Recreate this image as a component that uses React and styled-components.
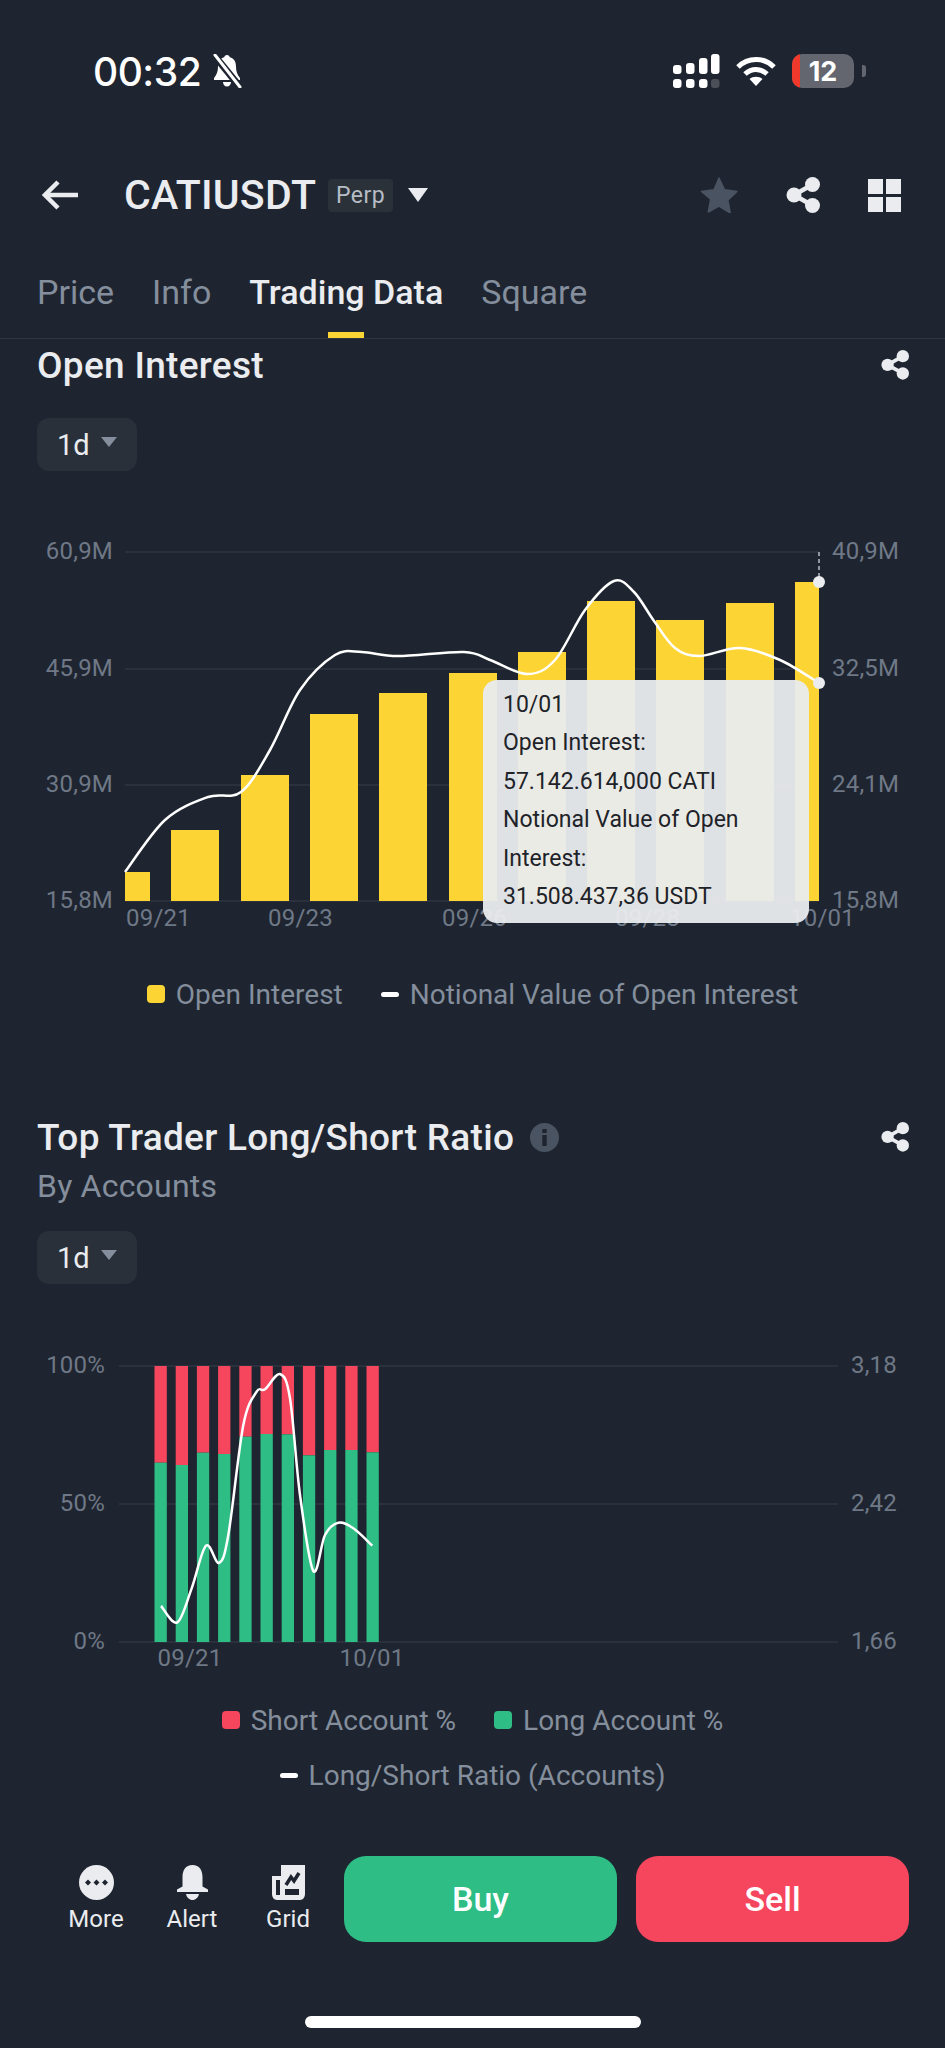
import React from 'react';
import styled, { createGlobalStyle } from 'styled-components';

const COLORS = {
  bg: '#1e2530',
  panel: '#2b3139',
  text: '#eaecef',
  muted: '#848e9c',
  axis: '#6f7886',
  grid: '#2f3641',
  yellow: '#fcd535',
  green: '#2ebd85',
  red: '#f6465d',
};

const FONT = `Roboto, "Noto Sans", "Liberation Sans", sans-serif`;

const GlobalStyle = createGlobalStyle`
  html, body { margin: 0; padding: 0; background: ${COLORS.bg}; }
  * { box-sizing: border-box; }
`;

// --- layout ---

const Screen = styled.div`
  width: 945px;
  height: 2048px;
  display: flex;
  flex-direction: column;
  overflow: hidden;
  background: ${COLORS.bg};
  color: ${COLORS.text};
  font-family: ${FONT};
`;

const StatusBar = styled.div`
  height: 142px;
  flex: none;
  display: flex;
  align-items: center;
  justify-content: space-between;
  padding: 0 79px 0 93px;
`;

const StatusGroup = styled.div`
  display: flex;
  align-items: center;
  gap: ${p => p.$gap}px;
`;

const Clock = styled.span`
  font-family: Inter, ${FONT};
  font-size: 39px;
  font-weight: 500;
  color: #fff;
  letter-spacing: -0.5px;
`;

const Battery = styled.div`
  position: relative;
  width: 62px;
  height: 34px;
  border-radius: 10px;
  overflow: hidden;
  background: #63666e;
  display: flex;
  align-items: center;
  justify-content: center;
  font-size: 27px;
  font-weight: 700;
  color: #fff;
  font-family: Inter, ${FONT};
  &::before {
    content: '';
    position: absolute;
    left: 0;
    top: 0;
    bottom: 0;
    width: 8px;
    background: #f0392b;
  }
`;

const BatteryNub = styled.div`
  width: 4px;
  height: 12px;
  margin-left: -8px;
  border-radius: 0 3px 3px 0;
  background: #63666e;
`;

const NavBar = styled.div`
  height: 106px;
  flex: none;
  display: flex;
  align-items: center;
  padding: 0 44px 0 42px;
`;

const Symbol = styled.h1`
  margin: 0 12px 0 46px;
  font-size: 41px;
  font-weight: 500;
  letter-spacing: 0.2px;
  color: ${COLORS.text};
`;

const Badge = styled.span`
  padding: 3px 8px;
  border-radius: 4px;
  background: ${COLORS.panel};
  color: #b7bdc6;
  font-size: 23px;
  letter-spacing: 0.4px;
`;

const NavCaret = styled.span`
  width: 0;
  height: 0;
  margin-left: 15px;
  border-left: 10px solid transparent;
  border-right: 10px solid transparent;
  border-top: 14px solid ${COLORS.text};
`;

const NavActions = styled.div`
  margin-left: auto;
  display: flex;
  align-items: center;
  gap: 48px;
`;

const Tabs = styled.div`
  height: 91px;
  flex: none;
  display: flex;
  gap: 38px;
  padding: 0 37px;
  border-bottom: 1px solid ${COLORS.grid};
`;

const Tab = styled.div`
  position: relative;
  padding-top: 24px;
  font-size: 34px;
  font-weight: ${p => (p.$active ? 500 : 400)};
  color: ${p => (p.$active ? COLORS.text : COLORS.muted)};
  ${p => p.$active && `
    &::after {
      content: '';
      position: absolute;
      left: 50%;
      bottom: 0;
      width: 36px;
      height: 6px;
      margin-left: -18px;
      background: ${COLORS.yellow};
    }
  `}
`;

const Body = styled.div`
  flex: 1;
  min-height: 0;
  overflow: hidden;
`;

const TitleRow = styled.div`
  height: ${p => p.$height}px;
  display: flex;
  align-items: center;
  padding: 0 36px 0 37px;
  margin-top: ${p => p.$top || 0}px;
`;

const Title = styled.h2`
  margin: 0;
  font-size: 37px;
  font-weight: 500;
  letter-spacing: 0.3px;
  color: ${COLORS.text};
`;

const InfoDot = styled.span`
  display: flex;
  margin-left: 16px;
`;

const RightIcon = styled.span`
  display: flex;
  margin-left: auto;
`;

const SubTitle = styled.div`
  height: 46px;
  line-height: 46px;
  padding-left: 37px;
  font-size: 32px;
  color: ${COLORS.muted};
  letter-spacing: 0.2px;
`;

const Dropdown = styled.div`
  width: 100px;
  height: 53px;
  margin: ${p => p.$top}px 0 0 37px;
  padding-left: 20px;
  display: flex;
  align-items: center;
  gap: 11px;
  border-radius: 12px;
  background: #2a3039;
  font-size: 29px;
  color: ${COLORS.text};
`;

const DropdownCaret = styled.span`
  width: 0;
  height: 0;
  margin-bottom: 5px;
  border-left: 8px solid transparent;
  border-right: 8px solid transparent;
  border-top: 10px solid ${COLORS.muted};
`;

const ChartBox = styled.div`
  position: relative;
  width: 945px;
  height: ${p => p.$height}px;
  margin-top: ${p => p.$top}px;
`;

const ChartSvg = styled.svg`
  display: block;
`;

const AxisLabel = styled.text`
  font-family: ${FONT};
  font-size: 24px;
  fill: ${COLORS.axis};
  letter-spacing: 0.2px;
`;

const Tooltip = styled.div`
  position: absolute;
  left: 483px;
  top: 180px;
  width: 326px;
  height: 243px;
  padding: 6px 20px;
  border-radius: 14px;
  background: rgba(234, 236, 239, 0.95);
  color: #1e2329;
  font-size: 23px;
  line-height: 38.4px;
`;

const LegendRow = styled.div`
  height: ${p => p.$height}px;
  display: flex;
  align-items: center;
  justify-content: center;
  gap: 38px;
  font-size: 28px;
  color: ${COLORS.muted};
`;

const LegendItem = styled.div`
  display: flex;
  align-items: center;
  gap: 11px;
`;

const Swatch = styled.span`
  width: 18px;
  height: 18px;
  border-radius: 4px;
  background: ${p => p.$color};
`;

const LegendDash = styled.span`
  width: 18px;
  height: 5px;
  border-radius: 3px;
  background: #fff;
`;

const BottomBar = styled.div`
  height: 218px;
  flex: none;
  display: flex;
  flex-direction: column;
  padding: 26px 36px 0 48px;
`;

const ActionRow = styled.div`
  display: flex;
  align-items: center;
`;

const ToolButtons = styled.div`
  display: flex;
  width: 296px;
`;

const ToolButton = styled.div`
  width: 96px;
  height: 86px;
  padding-top: 9px;
  display: flex;
  flex-direction: column;
  align-items: center;
  gap: 5px;
  font-size: 24px;
  color: ${COLORS.text};
`;

const TradeButton = styled.div`
  width: 273px;
  height: 86px;
  margin-left: ${p => p.$left}px;
  display: flex;
  align-items: center;
  justify-content: center;
  border-radius: 22px;
  background: ${p => p.$color};
  color: #fff;
  font-size: 34px;
  font-weight: 500;
`;

const HomeIndicator = styled.div`
  width: 336px;
  height: 12px;
  margin: 74px 0 0 257px;
  border-radius: 6px;
  background: #fff;
`;

// --- data (chart coords, page x / y minus chart top) ---

const OI_TOP = 500;
const oiBars = [
  [125, 25, 872], [171, 48, 830], [241, 48, 775], [310, 48, 714], [379, 48, 693], [449, 48, 673],
  [518, 48, 652], [587, 48, 601], [656, 48, 620], [726, 48, 603], [795, 24, 582],
].map(([x, w, top]) => ({ x, w, y: top - OI_TOP, h: 901 - top }));

const oiLine = [
  [125, 872], [165, 820], [208, 797], [241, 792], [270, 750], [300, 690], [335, 655], [362, 652], [398, 656],
  [464, 652], [490, 660], [527, 674], [555, 660], [585, 610], [614, 581], [634, 592], [654, 621], [675, 648], [699, 656],
  [740, 648], [780, 660], [819, 683],
].map(([x, y]) => [x, y - OI_TOP]);

const oiAxis = [
  { y: 552, left: '60,9M', right: '40,9M' },
  { y: 669, left: '45,9M', right: '32,5M' },
  { y: 785, left: '30,9M', right: '24,1M' },
  { y: 901, left: '15,8M', right: '15,8M' },
];

const oiDates = [[126, '09/21'], [268, '09/23'], [442, '09/26'], [615, '09/28'], [790, '10/01']];

const LS_TOP = 1340;
const lsGreenTops = [383, 390, 353, 357, 305, 297, 298, 361, 345, 345, 352].map(v => v / 3);

const lsLine = [
  [183, 813], [232, 862], [275, 760], [318, 632], [357, 684], [385, 600], [430, 270], [470, 170], [495, 163],
  [540, 117], [570, 190], [600, 480], [640, 708], [675, 600], [715, 563], [760, 580], [817, 632],
].map(([x, y]) => [x / 3 + 100, y / 3]);

const lsAxis = [
  { y: 31, left: '100%', right: '3,18' },
  { y: 169, left: '50%', right: '2,42' },
  { y: 307, left: '0%', right: '1,66' },
];

// catmull-rom through the points
const smoothPath = pts => {
  let d = `M${pts[0][0]} ${pts[0][1]}`;
  for (let i = 0; i < pts.length - 1; i++) {
    const p0 = pts[i - 1] || pts[i];
    const p1 = pts[i];
    const p2 = pts[i + 1];
    const p3 = pts[i + 2] || p2;
    const c1x = p1[0] + (p2[0] - p0[0]) / 6;
    const c1y = p1[1] + (p2[1] - p0[1]) / 6;
    const c2x = p2[0] - (p3[0] - p1[0]) / 6;
    const c2y = p2[1] - (p3[1] - p1[1]) / 6;
    d += ` C${c1x} ${c1y} ${c2x} ${c2y} ${p2[0]} ${p2[1]}`;
  }
  return d;
};

// --- icons ---

const MutedBell = () => (
  <svg width="32" height="34" viewBox="0 0 32 34">
    <path d="M16 1c-1.600 0-2.600 1-2.800 2.300C8.800 4.400 7 8 7 12.500c0 5-1.200 8-4 11.500v2h26v-2c-2.800-3.500-4-6.500-4-11.500 0-4.500-1.800-8.100-6.200-9.200C18.600 2 17.600 1 16 1z" fill="#fff" />
    <path d="M12 28h8c0 2.600-1.800 4.500-4 4.500s-4-1.900-4-4.500z" fill="#fff" />
    <path d="M3 1l26 32" stroke={COLORS.bg} strokeWidth="7" />
    <path d="M4 1l25 32" stroke="#fff" strokeWidth="3" strokeLinecap="round" />
  </svg>
);

const SignalIcon = () => (
  <svg width="47" height="34" viewBox="0 0 47 34" fill="#fff">
    <rect x="0" y="11" width="8.500" height="9" rx="3" />
    <rect x="13" y="9" width="8.500" height="11" rx="3" />
    <rect x="26" y="4" width="8.500" height="16" rx="3" />
    <rect x="38" y="0" width="8.500" height="20" rx="3" />
    <rect x="0" y="25" width="8.500" height="9" rx="3" />
    <rect x="13" y="25" width="8.500" height="9" rx="3" />
    <rect x="26" y="25" width="8.500" height="9" rx="3" />
    <rect x="38" y="25" width="8.500" height="9" rx="3" fill="#4a4f58" />
  </svg>
);

const WifiIcon = () => (
  <svg width="40" height="30" viewBox="0 0 40 30" fill="none" stroke="#fff" strokeWidth="5">
    <path d="M2 11c10-10 26-10 36 0" />
    <path d="M9 18c6.500-6 15.500-6 22 0" />
    <path d="M20 30l-6.500-7c3.500-3 9.500-3 13 0z" fill="#fff" stroke="none" />
  </svg>
);

const BackArrow = () => (
  <svg width="36" height="30" viewBox="0 0 36 30" fill="none" stroke={COLORS.text} strokeWidth="4.500">
    <path d="M36 15H4" />
    <path d="M16 2L3 15l13 13" />
  </svg>
);

const StarIcon = () => (
  <svg width="38" height="36" viewBox="0 0 38 36">
    <path d="M19 1l5.500 11.800 12.500 1.600-9.200 8.800 2.400 12.800L19 29l-10.700 6 2.400-12.800L1.500 14.400 14 12.800z" fill="#4a5361" stroke="#4a5361" strokeWidth="1.500" strokeLinejoin="round" />
  </svg>
);

const ShareIcon = ({ size = 34 }) => (
  <svg width={size} height={size * 36 / 34} viewBox="0 0 34 36" fill={COLORS.text}>
    <circle cx="8" cy="18" r="7.500" />
    <circle cx="26.500" cy="7.500" r="7.500" />
    <circle cx="26.500" cy="28.500" r="7.500" />
    <path d="M8 18L26.500 7.500M8 18l18.500 10.500" stroke={COLORS.text} strokeWidth="4.500" />
  </svg>
);

const GridIcon = () => (
  <svg width="33" height="33" viewBox="0 0 33 33" fill={COLORS.text}>
    <rect x="0" y="0" width="15" height="15" />
    <rect x="18" y="0" width="15" height="15" />
    <rect x="0" y="18" width="15" height="15" />
    <rect x="18" y="18" width="15" height="15" />
  </svg>
);

const InfoIcon = () => (
  <svg width="29" height="29" viewBox="0 0 29 29">
    <circle cx="14.500" cy="14.500" r="14.500" fill="#4a5361" />
    <rect x="12.300" y="12" width="4.400" height="11" fill={COLORS.bg} />
    <rect x="12.300" y="6" width="4.400" height="4" fill={COLORS.bg} />
  </svg>
);

const MoreIcon = () => (
  <svg width="35" height="35" viewBox="0 0 35 35">
    <circle cx="17.500" cy="17.500" r="17.500" fill={COLORS.text} />
    <path d="M9 14.500l3 3-3 3-3-3zM17.500 14.500l3 3-3 3-3-3zM26 14.500l3 3-3 3-3-3z" fill={COLORS.bg} />
  </svg>
);

const BellIcon = () => (
  <svg width="33" height="35" viewBox="0 0 33 35" fill={COLORS.text}>
    <path d="M16.500 0C9.500 0 6.500 5.500 6.500 12v9.500L1 24.500V27h31v-2.500l-5.500-3V12C26.500 5.500 23.500 0 16.500 0z" />
    <path d="M10 29h13c-.8 3.500-3.300 6-6.500 6S10.800 32.500 10 29z" />
  </svg>
);

const GridBotIcon = () => (
  <svg width="33" height="35" viewBox="0 0 33 35">
    <path d="M9 0h24v29c0 3-2 6-5 6H5c-3 0-5-3-5-6V11h9z" fill={COLORS.text} />
    <path d="M4 15h4v15H4z" fill={COLORS.bg} />
    <path d="M13 24h14v6H13z" fill={COLORS.bg} />
    <path d="M14 20l5-8 3 4 5-8" fill="none" stroke={COLORS.bg} strokeWidth="3.500" />
  </svg>
);

// --- charts ---

const OpenInterestChart = () => (
  <ChartBox $top={29} $height={470}>
    <ChartSvg width="945" height="470" viewBox="0 0 945 470">
      {oiAxis.map(a => (
        <g key={a.y}>
          <line x1="125" x2="819" y1={a.y - OI_TOP} y2={a.y - OI_TOP} stroke={COLORS.grid} strokeWidth="1.500" />
          <AxisLabel x="113" y={a.y - OI_TOP + 7} textAnchor="end">{a.left}</AxisLabel>
          <AxisLabel x="832" y={a.y - OI_TOP + 7}>{a.right}</AxisLabel>
        </g>
      ))}
      {oiBars.map(b => <rect key={b.x} x={b.x} y={b.y} width={b.w} height={b.h} fill={COLORS.yellow} />)}
      {oiDates.map(([x, label]) => <AxisLabel key={label} x={x} y={426}>{label}</AxisLabel>)}
      <path d={smoothPath(oiLine)} fill="none" stroke="#fff" strokeWidth="2.500" />
      <line x1="819" x2="819" y1="52" y2="82" stroke="#b7bdc6" strokeWidth="1.500" strokeDasharray="4 3" />
      <circle cx="819" cy="82" r="6" fill={COLORS.text} />
      <circle cx="819" cy="183" r="6" fill={COLORS.text} />
    </ChartSvg>
    <Tooltip>
      <div>10/01</div>
      <div>Open Interest:</div>
      <div>57.142.614,000 CATI</div>
      <div>Notional Value of Open Interest:</div>
      <div>31.508.437,36 USDT</div>
    </Tooltip>
  </ChartBox>
);

const LongShortChart = () => (
  <ChartBox $top={51} $height={360}>
    <ChartSvg width="945" height="360" viewBox="0 0 945 360">
      {lsAxis.map(a => (
        <g key={a.y}>
          <line x1="119" x2="838" y1={a.y} y2={a.y} stroke={COLORS.grid} strokeWidth="1.500" />
          <AxisLabel x="105" y={a.y + 7} textAnchor="end">{a.left}</AxisLabel>
          <AxisLabel x="851" y={a.y + 7}>{a.right}</AxisLabel>
        </g>
      ))}
      {lsGreenTops.map((top, i) => {
        const x = 154.5 + i * 21.2;
        return (
          <g key={x}>
            <rect x={x} y={31} width="12.300" height={top - 31} fill={COLORS.red} />
            <rect x={x} y={top} width="12.300" height={307 - top} fill={COLORS.green} />
          </g>
        );
      })}
      <path d={smoothPath(lsLine)} fill="none" stroke="#fff" strokeWidth="2.500" />
      <AxisLabel x="190" y={331} textAnchor="middle">09/21</AxisLabel>
      <AxisLabel x="372" y={331} textAnchor="middle">10/01</AxisLabel>
    </ChartSvg>
  </ChartBox>
);

const App = () => {
  return (
    <>
      <GlobalStyle />
      <Screen>
        <StatusBar>
          <StatusGroup $gap={10}>
            <Clock>00:32</Clock>
            <MutedBell />
          </StatusGroup>
          <StatusGroup $gap={16}>
            <SignalIcon />
            <WifiIcon />
            <Battery>12</Battery>
            <BatteryNub />
          </StatusGroup>
        </StatusBar>

        <NavBar>
          <BackArrow />
          <Symbol>CATIUSDT</Symbol>
          <Badge>Perp</Badge>
          <NavCaret />
          <NavActions>
            <StarIcon />
            <ShareIcon />
            <GridIcon />
          </NavActions>
        </NavBar>

        <Tabs>
          <Tab>Price</Tab>
          <Tab>Info</Tab>
          <Tab $active>Trading Data</Tab>
          <Tab>Square</Tab>
        </Tabs>

        <Body>
          <TitleRow $height={52}>
            <Title>Open Interest</Title>
            <RightIcon><ShareIcon size={28} /></RightIcon>
          </TitleRow>
          <Dropdown $top={27}>1d<DropdownCaret /></Dropdown>
          <OpenInterestChart />
          <LegendRow $height={48}>
            <LegendItem><Swatch $color={COLORS.yellow} />Open Interest</LegendItem>
            <LegendItem><LegendDash />Notional Value of Open Interest</LegendItem>
          </LegendRow>

          <TitleRow $height={52} $top={93}>
            <Title>Top Trader Long/Short Ratio</Title>
            <InfoDot><InfoIcon /></InfoDot>
            <RightIcon><ShareIcon size={28} /></RightIcon>
          </TitleRow>
          <SubTitle>By Accounts</SubTitle>
          <Dropdown $top={22}>1d<DropdownCaret /></Dropdown>
          <LongShortChart />
          <LegendRow $height={50}>
            <LegendItem><Swatch $color={COLORS.red} />Short Account %</LegendItem>
            <LegendItem><Swatch $color={COLORS.green} />Long Account %</LegendItem>
          </LegendRow>
          <LegendRow $height={60}>
            <LegendItem><LegendDash />Long/Short Ratio (Accounts)</LegendItem>
          </LegendRow>
        </Body>

        <BottomBar>
          <ActionRow>
            <ToolButtons>
              <ToolButton><MoreIcon />More</ToolButton>
              <ToolButton><BellIcon />Alert</ToolButton>
              <ToolButton><GridBotIcon />Grid</ToolButton>
            </ToolButtons>
            <TradeButton $color={COLORS.green} $left={0}>Buy</TradeButton>
            <TradeButton $color={COLORS.red} $left={19}>Sell</TradeButton>
          </ActionRow>
          <HomeIndicator />
        </BottomBar>
      </Screen>
    </>
  );
};

export default App;
